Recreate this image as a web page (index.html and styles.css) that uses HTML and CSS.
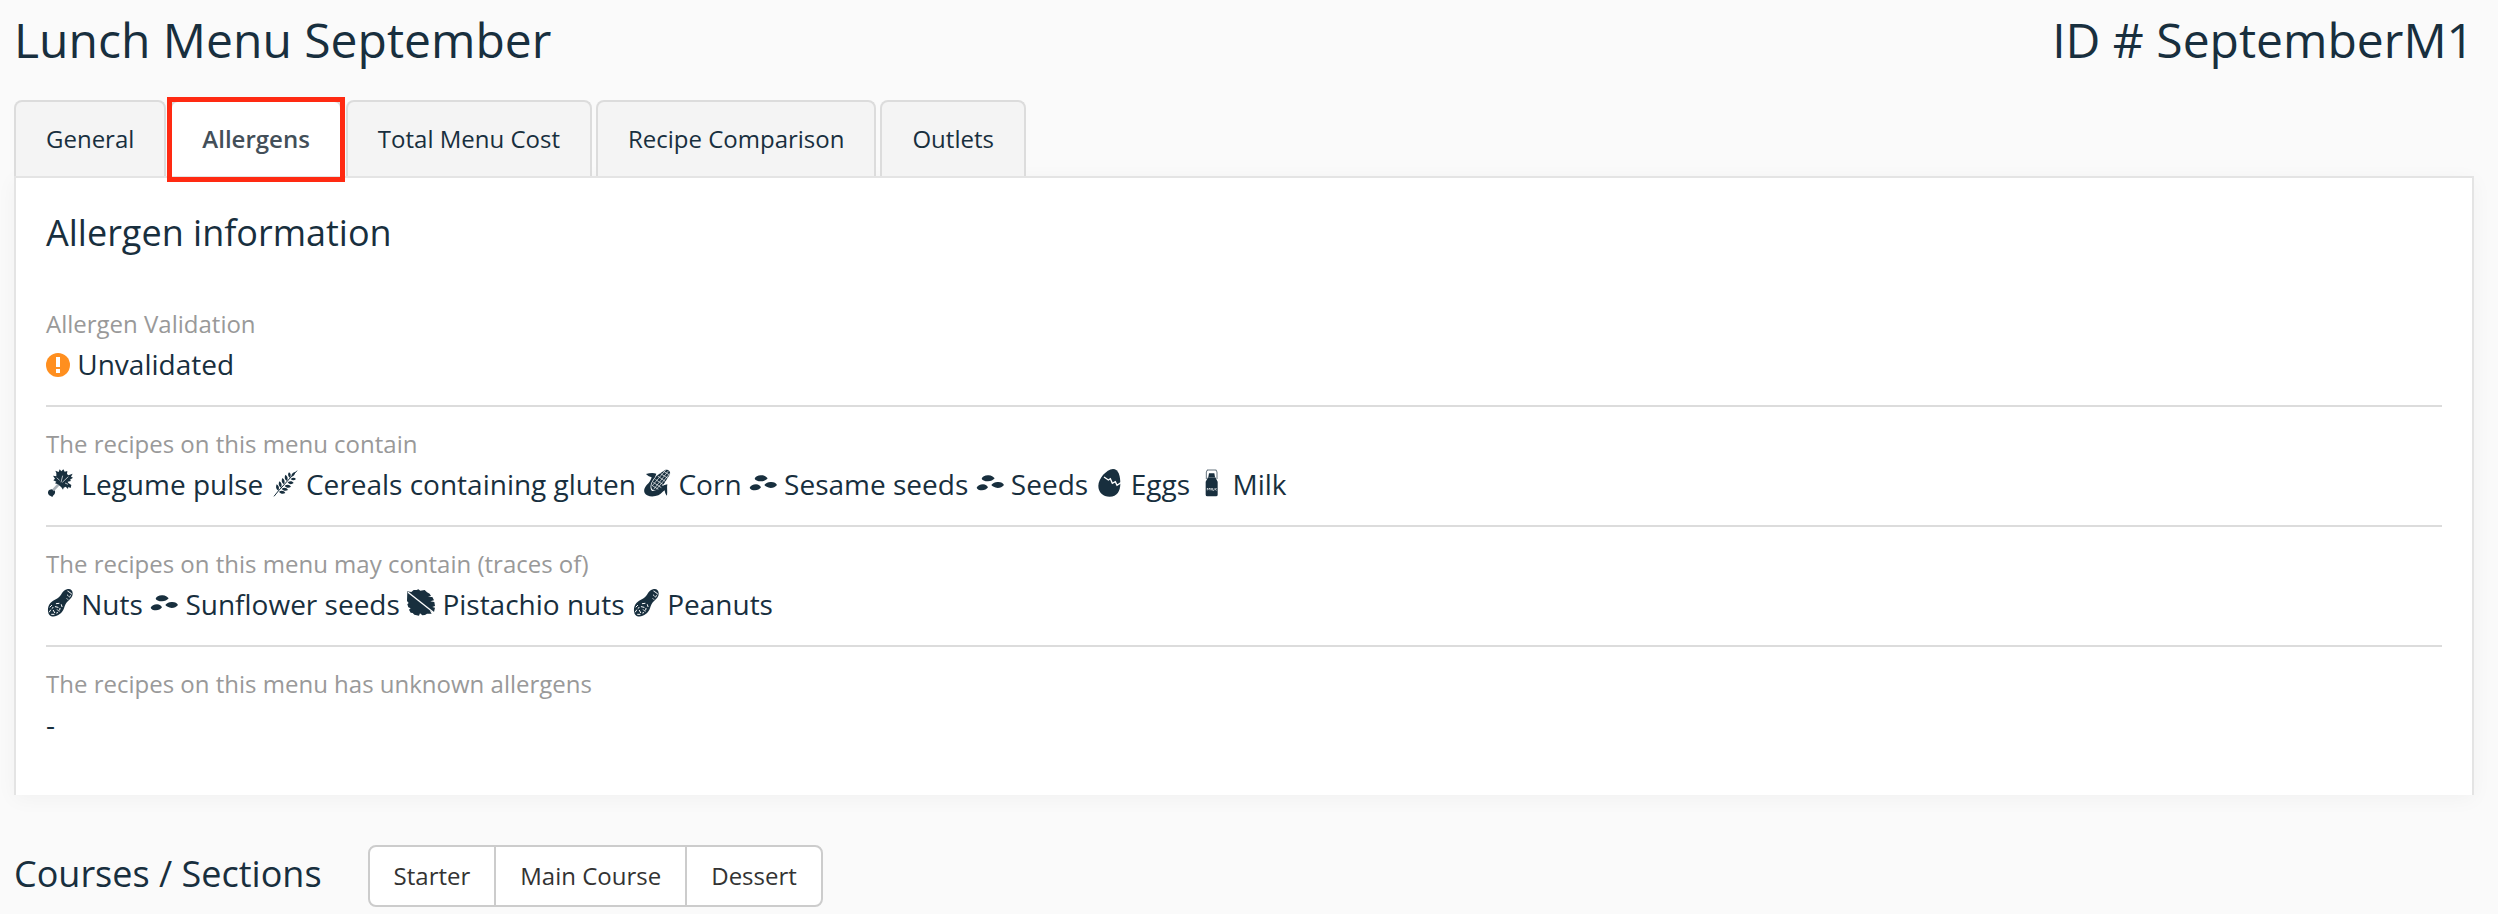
FILE: index.html
```html
<!DOCTYPE html>
<html lang="en">
<head>
<meta charset="utf-8">
<title>Lunch Menu September</title>
<link rel="stylesheet" href="styles.css">
</head>
<body>
<svg class="sprite" aria-hidden="true">
  <defs>
    <symbol id="legume" viewBox="0 0 84 84">
      <path d="M7 66c3-6 14-8 19-2 3 6 1 13-5 16l-2 4-5-3c-7-2-10-9-7-15z"/>
      <path class="stalk" d="M21 64L42 42"/>
      <path d="M36 46l-9-3 4-5-9-4 5-5-6-9 10 2 0-10-3-7 10 4 3-8 5 6 6-6 4 7 8-2-1 9 4 4 13-5-5 9 6 3-9 6 3 4-10 2 2 4 9 6-2 9-7-3-1 6-7-7-6 3-2 6-5-7z"/>
      <path class="gap" d="M45 40L50 20M49 40l18-17M32 26l9 8M57 42l9 4"/>
    </symbol>
    <symbol id="wheat" viewBox="0 0 84 84">
      <path class="line" d="M9 82L22 66 62 22 78 5"/>
      <path d="M22 65c-8-5-8-12-5-19 7 4 9 11 5 19zM30 56c-8-5-8-12-5-19 7 4 9 11 5 19zM39 46c-8-5-8-12-5-19 7 4 9 11 5 19zM48 36c-8-5-8-12-5-19 7 4 9 11 5 19zM57 27c-7-5-7-12-3-17 6 4 7 10 3 17z"/>
      <path d="M24 68c5 7 12 8 19 4-4-7-11-9-19-4zM32 59c5 7 12 8 19 4-4-7-11-9-19-4zM41 50c5 7 12 8 19 3-4-7-11-8-19-3zM50 40c5 7 12 7 18 2-4-6-11-7-18-2zM59 30c5 5 11 5 16 0-4-5-10-5-16 0zM61 23c0-8 4-13 12-14-1 8-5 13-12 14z"/>
    </symbol>
    <symbol id="corn" viewBox="0 0 84 84">
      <path d="M9 15c11-3 22-4 31-1l-4 11C26 37 20 49 24 62c2 4 6 5 11 3 7-2 12-8 18-13 7-3 12-3 20-6-2 10 1 20-1 34-5-4-6-10-7-16-8 4-9 11-19 15-14 5-35 5-41-7-5-12 4-22 12-30 5-6 7-11 9-17-6-3-11-3-17-10z"/>
      <path d="M41 20L66 3c8-3 18 4 15 13L62 46 45 60c-9 8-20 4-20-7 0-13 9-22 16-33z"/>
      <path class="gap" d="M31 40l24 16M37 31l25 17M44 21l24 17M53 14l22 14M62 7l18 11M28 50l18 11M32 61L76 6M27 51L68 3M40 61l42-49"/>
    </symbol>
    <symbol id="seeds" viewBox="0 0 84 84">
      <path d="M17 29c2-6 11-11 21-10 8 0 14 5 18 9-5 6-11 9-20 9-10 0-18-4-19-8zM2 56c3-6 10-10 19-10 8 0 13 5 15 9-4 6-10 9-18 9S3 61 2 56zM46 48c5-6 13-10 21-9 9 0 14 4 17 9-5 6-11 9-19 9-9-1-16-5-19-9z"/>
    </symbol>
    <symbol id="egg" viewBox="0 0 84 84">
      <path d="M54 0C34 2 10 28 10 51c0 19 14 32 34 32 22 0 32-18 32-39C76 22 71 0 54 0z"/>
      <path class="crack" d="M27 24l13 9 6-4 6 14 9-5 5 11 12-8"/>
    </symbol>
    <symbol id="milk" viewBox="0 0 84 84">
      <path class="line thin" d="M30 3h28M28 30V9l3-6M60 30V9l-3-6"/>
      <path d="M36 13h16l2 11H34zM33 25h22l7 13v39q0 5-5 5H31q-5 0-5-5V38z"/>
      <path class="mark" d="M31 64v-7l4 4 4-4v7M43 57v7M47 57v7h4M54 57v7M59 57l-4 4 4 3"/>
    </symbol>
    <symbol id="peanut" viewBox="0 0 84 84">
      <path d="M63 1c10-3 18 3 17 14 0 8-7 15-13 20-7 6-10 13-13 23-6 17-25 29-40 23C3 75 3 52 14 41c9-9 22-11 31-24 5-7 9-14 18-16z"/>
      <path class="hole" d="M31 44l8-1M46 47l2 6M28 53l8 2M17 49l-5 5M14 63l-4 6M22 64l4 7M34 62l5 5M17 76l7 0M42 58l-1 5M69 9l4 2M64 18l3 3M73 20l-2 4M63 29l2 2M75 13l1 2M66 6l1 2M21 55l-2 3M32 72l3-1"/>
    </symbol>
    <symbol id="pistachio" viewBox="0 0 84 84">
      <path d="M1 7l12 2 7-6 9 0 5-2 6 4 13-2 7 7 8 4 4 7-9 3 13 0 5 10-11 3 12 2 2 12-8 3 8 2-3 13-12-3 5 8-14 0-6 4-8 1-7-6-3 7-14-3-5-5-6-1-5-9 5-4-7-3-3-9 4-4-5-6z"/>
      <path class="crack" d="M3 10l76 60"/>
    </symbol>
  </defs>
</svg>

<header class="page-head">
  <h1>Lunch Menu September</h1>
  <div class="menu-id">ID # SeptemberM1</div>
</header>

<main>
  <nav class="tabs">
    <button class="tab" type="button">General</button>
    <button class="tab active" type="button">Allergens</button>
    <button class="tab" type="button">Total Menu Cost</button>
    <button class="tab" type="button">Recipe Comparison</button>
    <button class="tab" type="button">Outlets</button>
  </nav>

  <section class="panel">
    <h2>Allergen information</h2>
    <dl>
      <div class="row">
        <dt>Allergen Validation</dt>
        <dd><svg class="warn" viewBox="0 0 24 24"><circle cx="12" cy="12" r="12"/><path d="M10 4h4v10h-4zM10 16h4v4h-4z"/></svg> Unvalidated</dd>
      </div>
      <div class="row">
        <dt>The recipes on this menu contain</dt>
        <dd>
          <svg class="icon"><use href="#legume"/></svg> Legume pulse
          <svg class="icon"><use href="#wheat"/></svg> Cereals containing gluten
          <svg class="icon"><use href="#corn"/></svg> Corn
          <svg class="icon"><use href="#seeds"/></svg> Sesame seeds
          <svg class="icon"><use href="#seeds"/></svg> Seeds
          <svg class="icon"><use href="#egg"/></svg> Eggs
          <svg class="icon"><use href="#milk"/></svg> Milk
        </dd>
      </div>
      <div class="row">
        <dt>The recipes on this menu may contain (traces of)</dt>
        <dd>
          <svg class="icon"><use href="#peanut"/></svg> Nuts
          <svg class="icon"><use href="#seeds"/></svg> Sunflower seeds
          <svg class="icon"><use href="#pistachio"/></svg> Pistachio nuts
          <svg class="icon"><use href="#peanut"/></svg> Peanuts
        </dd>
      </div>
      <div class="row">
        <dt>The recipes on this menu has unknown allergens</dt>
        <dd>-</dd>
      </div>
    </dl>
  </section>

  <section class="courses">
    <h2>Courses / Sections</h2>
    <div class="group">
      <button type="button">Starter</button>
      <button type="button">Main Course</button>
      <button type="button">Dessert</button>
    </div>
  </section>
</main>
</body>
</html>
```
FILE: styles.css
```css
* { box-sizing: border-box; }

body {
  margin: 0;
  padding: 8px 24px 8px 14px;
  background: #fafafa;
  color: #182f3e;
  font-family: "Open Sans", "Noto Sans", sans-serif;
  font-size: 28px;
}

h1, h2, dl, dd { margin: 0; font-weight: 400; }

button { font-family: inherit; font-size: 24px; cursor: pointer; }

.sprite { position: absolute; width: 0; height: 0; }

.page-head {
  display: flex;
  justify-content: space-between;
  font-size: 48px;
  line-height: 64px;
}
h1 { font-size: 48px; }

h2 { font-size: 36px; line-height: 50px; }

.tabs {
  display: flex;
  align-items: flex-end;
  gap: 4px;
  margin-top: 28px;
}

.tab {
  height: 76px;
  padding: 0 30px 2px;
  border: 2px solid #dcdcdc;
  border-bottom: 0;
  border-radius: 8px 8px 0 0;
  background: #f4f4f4;
  color: #182f3e;
}

.tab.active {
  position: relative;
  background: #fff;
  color: #434f59;
  font-weight: 600;
}

.tab.active::after {
  content: "";
  position: absolute;
  inset: -5px -5px -6px;
  border: 5px solid #ff2a12;
}

.panel {
  padding: 30px;
  border: 2px solid #e4e4e4;
  border-bottom: 0;
  background: #fff;
  box-shadow: 0 4px 20px rgba(0, 0, 0, 0.04);
}

dl { margin-top: 29px; }

.row { padding: 20px 0; }
.row + .row { border-top: 2px solid #dcdcdc; }

dt { margin-bottom: 2px; color: #999; font-size: 24px; line-height: 34px; }
dd { line-height: 42px; }

.icon { width: 28px; height: 28px; vertical-align: -2px; fill: #182f3e; }
.line { fill: none; stroke: #182f3e; stroke-width: 3; }
.thin { stroke-width: 2; }
.stalk { fill: none; stroke: #a9b1b8; stroke-width: 8; }
.gap { fill: none; stroke: #fff; stroke-width: 2; }
.crack { fill: none; stroke: #fff; stroke-width: 4; }
.mark { fill: none; stroke: #fff; stroke-width: 2; }
.hole { fill: none; stroke: #fff; stroke-width: 3; stroke-linecap: round; }

.warn { width: 24px; height: 24px; vertical-align: -2px; fill: #ff8f1f; }
.warn path { fill: #fff; }

.courses {
  display: flex;
  align-items: center;
  gap: 46px;
  margin-top: 50px;
}
.courses h2 { padding-bottom: 4px; }

.group {
  display: flex;
  border: 2px solid #ccc;
  border-radius: 8px;
  background: #fff;
}

.group button {
  height: 58px;
  padding: 0 24px 2px;
  border: 0;
  background: none;
  color: #333;
}
.group button + button { border-left: 2px solid #ccc; }
```
